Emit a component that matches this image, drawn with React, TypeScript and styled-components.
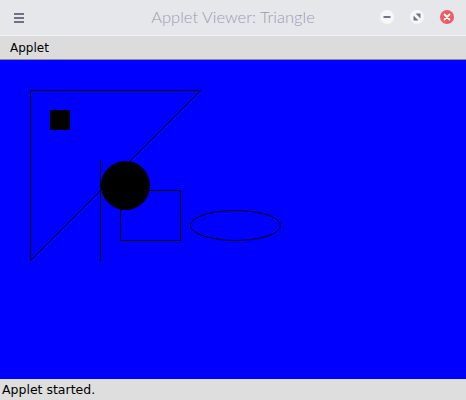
import React from "react";
import styled, { createGlobalStyle } from "styled-components";

const Global = createGlobalStyle`
  html, body { margin: 0; padding: 0; background: #dedede; }
  body { width: 466px; height: 400px; overflow: hidden; }
`;

const Window = styled.div`
  width: 466px;
  height: 400px;
  display: flex;
  flex-direction: column;
  background: #dedede;
`;

const TitleBar = styled.div`
  height: 35px;
  flex: none;
  display: grid;
  grid-template-columns: 100px 1fr 100px;
  align-items: center;
  background: #e6e7eb;
`;

const MenuIcon = styled.div`
  margin-left: 14px;
  width: 10px;
  height: 10px;
  display: flex;
  flex-direction: column;
  justify-content: space-between;
  & > span {
    display: block;
    height: 2px;
    background: #6d7286;
  }
`;

const Title = styled.div`
  text-align: center;
  font-family: "Lato", sans-serif;
  font-weight: 300;
  font-size: 16.5px;
  color: #9a9db0;
  padding-bottom: 1px;
  white-space: nowrap;
`;

const Controls = styled.div`
  display: flex;
  justify-content: flex-end;
  align-items: center;
  gap: 16px;
  padding-right: 12px;
  padding-bottom: 2px;
`;

const CircleBtn = styled.div<{ $bg: string }>`
  flex: none;
  width: 14px;
  height: 14px;
  border-radius: 50%;
  background: ${(p) => p.$bg};
  display: flex;
  align-items: center;
  justify-content: center;
`;

const MenuBar = styled.div`
  height: 23px;
  flex: none;
  border-top: 1px solid #f4f4f4;
  border-bottom: 1px solid #8a8a8a;
  background: #dcdcdc;
  display: flex;
  align-items: center;
`;

const MenuItem = styled.span`
  font-family: "DejaVu Sans", sans-serif;
  font-size: 12px;
  color: #000;
  margin-left: 10px;
  margin-top: 1px;
`;

const Canvas = styled.svg`
  display: block;
  flex: none;
  width: 466px;
  height: 319px;
  background: #0000ff;
  shape-rendering: crispEdges;
`;

const StatusBar = styled.div`
  flex: 1;
  background: #dedede;
  display: flex;
  align-items: center;
  font-family: "DejaVu Sans", sans-serif;
  font-size: 12.5px;
  color: #000;
  padding-left: 2px;
`;

export default function App() {
  return (
    <Window>
      <Global />
      <TitleBar>
        <MenuIcon>
          <span />
          <span />
          <span />
        </MenuIcon>
        <Title>Applet Viewer: Triangle</Title>
        <Controls>
          <CircleBtn $bg="#f7f7f9">
            <svg width="8" height="8" viewBox="0 0 8 8">
              <rect x="0.5" y="3" width="7" height="2" fill="#70738a" />
            </svg>
          </CircleBtn>
          <CircleBtn $bg="#f7f7f9">
            <svg width="8" height="8" viewBox="0 0 8 8">
              <path d="M2.5 0.5 L7.5 0.5 L7.5 5.5 Z" fill="#70738a" />
              <path d="M0.5 2.5 L0.5 7.5 L5.5 7.5 Z" fill="#70738a" />
            </svg>
          </CircleBtn>
          <CircleBtn $bg="#ef5b62">
            <svg width="8" height="8" viewBox="0 0 8 8">
              <path d="M1.5 1.5 L6.5 6.5 M6.5 1.5 L1.5 6.5" stroke="#fff" strokeWidth="1.8" strokeLinecap="round" />
            </svg>
          </CircleBtn>
        </Controls>
      </TitleBar>
      <MenuBar>
        <MenuItem>Applet</MenuItem>
      </MenuBar>
      <Canvas viewBox="0 0 466 319">
        <polygon points="30.5,30.5 200.5,30.5 30.5,200.5" fill="none" stroke="#000" strokeWidth="1" shapeRendering="auto" />
        <rect x="50" y="50" width="20" height="20" fill="#000" />
        <line x1="100.5" y1="100" x2="100.5" y2="201" stroke="#000" strokeWidth="1" />
        <circle cx="125.5" cy="125.5" r="24.5" fill="#000" shapeRendering="auto" />
        <rect x="120.5" y="130.5" width="60" height="50" fill="none" stroke="#000" strokeWidth="1" />
        <ellipse cx="235.5" cy="165.5" rx="45" ry="15" fill="none" stroke="#000" strokeWidth="1" shapeRendering="auto" />
      </Canvas>
      <StatusBar>Applet started.</StatusBar>
    </Window>
  );
}
